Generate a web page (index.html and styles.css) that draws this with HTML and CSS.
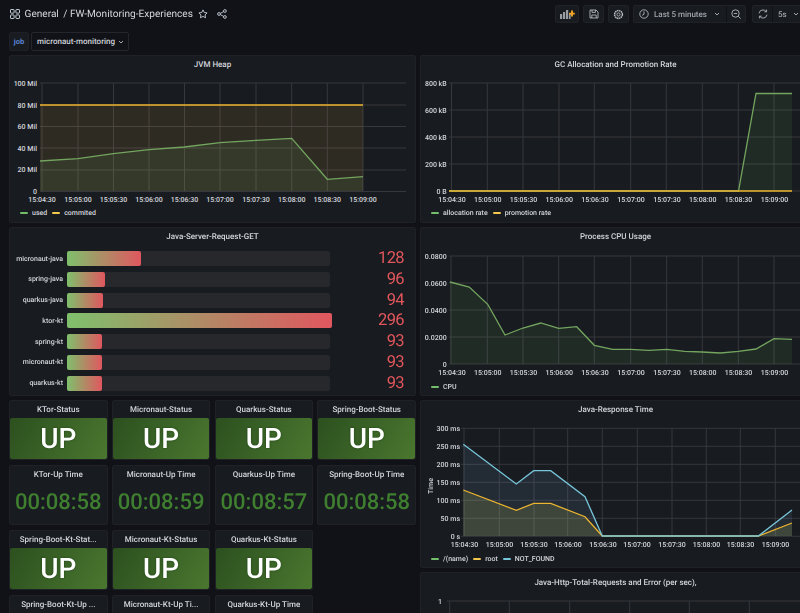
FILE: index.html
```html
<!DOCTYPE html>
<html lang="en">
<head>
<meta charset="utf-8">
<title>FW-Monitoring-Experiences</title>
<link rel="stylesheet" href="styles.css">
</head>
<body>
<div class="app">
  <header class="topbar">
    <div class="crumbs">
      <svg class="ic-grid" width="10" height="10" viewBox="0 0 10 10"><g fill="none" stroke="#c7d0d9" stroke-width="1"><rect x=".5" y=".5" width="3.6" height="3.6" rx=".6"/><rect x="5.9" y=".5" width="3.6" height="3.6" rx=".6"/><rect x=".5" y="5.9" width="3.6" height="3.6" rx=".6"/><rect x="5.9" y="5.9" width="3.6" height="3.6" rx=".6"/></g></svg>
      <span class="crumb">General</span>
      <span class="crumb crumb-sep">/ FW-Monitoring-Experiences</span>
      <svg class="ic-star" width="10" height="10" viewBox="0 0 10 10"><path d="M5 .9l1.25 2.6 2.85.4-2.05 2 .5 2.85L5 7.4 2.45 8.75l.5-2.85-2.05-2 2.85-.4z" fill="none" stroke="#c7d0d9" stroke-width=".9" stroke-linejoin="round"/></svg>
      <svg class="ic-share" width="10" height="10" viewBox="0 0 10 10"><g fill="none" stroke="#c7d0d9" stroke-width=".9"><circle cx="2" cy="5" r="1.4"/><circle cx="7.9" cy="2" r="1.4"/><circle cx="7.9" cy="8" r="1.4"/><path d="M3.3 4.4l3.4-1.8M3.3 5.6l3.4 1.8"/></g></svg>
    </div>
    <div class="tools">
      <button class="tbtn tbtn-add"><svg width="15" height="10" viewBox="0 0 15 10"><path d="M0 5h2.2v5H0zM3 3h2.2v7H3zM6 1h2.2v9H6zM9 4h1.6v6H9z" fill="#9a9ca3"/><path d="M12 1.600v6M9.200 4.600h5.600" stroke="#f5a623" stroke-width="1.900"/></svg></button>
      <button class="tbtn"><svg width="10" height="10" viewBox="0 0 10 10"><g fill="none" stroke="#b6b8c0" stroke-width=".9" stroke-linejoin="round"><path d="M1 1h6l2 2v6H1z"/><path d="M3 1v2.4h3.4V1M2.8 9V6h4.4v3"/></g></svg></button>
      <button class="tbtn"><svg width="11" height="11" viewBox="0 0 11 11"><g fill="none" stroke="#b6b8c0"><circle cx="5.5" cy="5.5" r="1.6" stroke-width=".9"/><circle cx="5.5" cy="5.5" r="3.9" stroke-width="1.5" stroke-dasharray="1.6 .44"/></g></svg></button>
      <div class="tgroup time">
        <div class="tseg seg-range">
          <svg width="10" height="10" viewBox="0 0 10 10"><g fill="none" stroke="#b6b8c0" stroke-width=".9"><circle cx="5" cy="5" r="4.2"/><path d="M5 2.4V5.3L3.2 6.3"/></g></svg>
          <span class="range-text">Last 5 minutes</span>
          <svg class="chev" width="6" height="4" viewBox="0 0 6 4"><path d="M1 1l2 2 2-2" fill="none" stroke="#b6b8c0" stroke-width=".9"/></svg>
        </div>
        <div class="tseg seg-zoom">
          <svg width="10" height="10" viewBox="0 0 10 10"><g fill="none" stroke="#b6b8c0" stroke-width=".9"><circle cx="4.5" cy="4.5" r="3.7"/><path d="M7.2 7.2L9.6 9.6M2.8 4.5h3.4"/></g></svg>
        </div>
      </div>
      <div class="tgroup refresh">
        <div class="tseg seg-ref">
          <svg width="10" height="10" viewBox="0 0 10 10"><g fill="none" stroke="#b6b8c0" stroke-width=".9"><path d="M1 4.3A4 4 0 0 1 8.2 2.6M9 5.7A4 4 0 0 1 1.8 7.4"/><path d="M8.6.6v2.2H6.4M1.4 9.4V7.2h2.2"/></g></svg>
        </div>
        <div class="tseg seg-int"><span class="range-text">5s</span><svg class="chev" width="6" height="4" viewBox="0 0 6 4"><path d="M1 1l2 2 2-2" fill="none" stroke="#b6b8c0" stroke-width=".9"/></svg></div>
      </div>
    </div>
  </header>

  <div class="vars">
    <span class="var-label">job</span>
    <span class="var-value">micronaut-monitoring<svg class="chev" width="6" height="4" viewBox="0 0 6 4"><path d="M1 1l2 2 2-2" fill="none" stroke="#c7d0d9" stroke-width=".8"/></svg></span>
  </div>

  <main class="dash">
    <section class="panel p-h1">
      <h2 class="ptitle">JVM Heap</h2>
      <svg class="chart" width="405" height="131" viewBox="10 73 405 131">
        <g class="grid">
          <path d="M40 83H406M40 105H406M40 126.500H406M40 148H406M40 170H406M40 191.500H406"/>
          <path d="M42 83V191M78 83V191M113.500 83V191M149 83V191M184.500 83V191M220 83V191M256 83V191M291.700 83V191M327.300 83V191M363 83V191"/>
        </g>
        <path class="fill-y" d="M40 105H363V191H40z"/>
        <path class="fill-g" d="M40 161L78 158.700 113.300 153.700 149 149.700 184.300 147 220 142.700 256 140.300 291.700 138.300 327.300 179.300 363 176.700V191H40z"/>
        <path class="line-g" d="M40 161L78 158.700 113.300 153.700 149 149.700 184.300 147 220 142.700 256 140.300 291.700 138.300 327.300 179.300 363 176.700"/>
        <path class="line-y" d="M40 105H363"/>
        <g class="tick yt">
          <text x="37" y="85.500">100 Mil</text><text x="37" y="107.500">80 Mil</text><text x="37" y="129">60 Mil</text><text x="37" y="150.500">40 Mil</text><text x="37" y="172">20 Mil</text><text x="37" y="194">0</text>
        </g>
        <g class="tick xt">
          <text x="42" y="201.500">15:04:30</text><text x="78" y="201.500">15:05:00</text><text x="113.500" y="201.500">15:05:30</text><text x="149" y="201.500">15:06:00</text><text x="184.500" y="201.500">15:06:30</text><text x="220" y="201.500">15:07:00</text><text x="256" y="201.500">15:07:30</text><text x="291.700" y="201.500">15:08:00</text><text x="327.300" y="201.500">15:08:30</text><text x="363" y="201.500">15:09:00</text>
        </g>
      </svg>
      <div class="legend">
        <span class="lg"><i class="sw sw-g"></i>used</span>
        <span class="lg"><i class="sw sw-y"></i>commited</span>
      </div>
    </section>

    <section class="panel p-h1">
      <h2 class="ptitle">GC Allocation and Promotion Rate</h2>
      <svg class="chart" width="390" height="131" viewBox="421 73 390 131">
        <g class="grid">
          <path d="M449 83H811M449 110H811M449 137H811M449 164H811M449 191H811"/>
          <path d="M451.500 83V191M487.300 83V191M523 83V191M559 83V191M594.300 83V191M630.700 83V191M666.300 83V191M702.300 83V191M738.300 83V191M774 83V191"/>
        </g>
        <path class="fill-g" d="M738.500 191L756 93.500H792V191z"/>
        <path class="line-g" d="M449 191H738.500L756 93.500H792"/>
        <path class="line-y" d="M449 191H792"/>
        <g class="tick yt">
          <text x="446.700" y="85.500">800 kB</text><text x="446.700" y="112.500">600 kB</text><text x="446.700" y="139.500">400 kB</text><text x="446.700" y="166.500">200 kB</text><text x="446.700" y="193.500">0 B</text>
        </g>
        <g class="tick xt">
          <text x="452" y="201.500">15:04:30</text><text x="487.700" y="201.500">15:05:00</text><text x="523.500" y="201.500">15:05:30</text><text x="559.300" y="201.500">15:06:00</text><text x="595" y="201.500">15:06:30</text><text x="631" y="201.500">15:07:00</text><text x="667" y="201.500">15:07:30</text><text x="702.700" y="201.500">15:08:00</text><text x="738.500" y="201.500">15:08:30</text><text x="774.500" y="201.500">15:09:00</text>
        </g>
      </svg>
      <div class="legend">
        <span class="lg"><i class="sw sw-g"></i>allocation rate</span>
        <span class="lg"><i class="sw sw-y"></i>promotion rate</span>
      </div>
    </section>

    <section class="panel p-h2">
      <h2 class="ptitle">Java-Server-Request-GET</h2>
      <div class="gauges">
        <div class="grow"><span class="glabel">micronaut-java</span><div class="gtrack"><div class="gbar" style="width:74px"></div></div><span class="gval">128</span></div>
        <div class="grow"><span class="glabel">spring-java</span><div class="gtrack"><div class="gbar" style="width:38px"></div></div><span class="gval">96</span></div>
        <div class="grow"><span class="glabel">quarkus-java</span><div class="gtrack"><div class="gbar" style="width:36px"></div></div><span class="gval">94</span></div>
        <div class="grow"><span class="glabel">ktor-kt</span><div class="gtrack"><div class="gbar" style="width:265px"></div></div><span class="gval">296</span></div>
        <div class="grow"><span class="glabel">spring-kt</span><div class="gtrack"><div class="gbar" style="width:35px"></div></div><span class="gval">93</span></div>
        <div class="grow"><span class="glabel">micronaut-kt</span><div class="gtrack"><div class="gbar" style="width:35px"></div></div><span class="gval">93</span></div>
        <div class="grow"><span class="glabel">quarkus-kt</span><div class="gtrack"><div class="gbar" style="width:35px"></div></div><span class="gval">93</span></div>
      </div>
    </section>

    <section class="panel p-h2">
      <h2 class="ptitle">Process CPU Usage</h2>
      <svg class="chart" width="390" height="133" viewBox="421 245 390 133">
        <g class="grid">
          <path d="M449 256H811M449 283H811M449 310H811M449 337H811M449 364H811"/>
          <path d="M451 256V364M487.300 256V364M523 256V364M558.700 256V364M594.300 256V364M630.700 256V364M666.700 256V364M702.300 256V364M738.300 256V364M774 256V364"/>
        </g>
        <path class="fill-g" d="M450 282L469.300 287 487.700 304.300 505 335 523 328 540.700 323 558.700 328.300 576.700 326.700 594.300 345.300 612.700 349.300 630.700 349.300 648.700 350.300 666.700 349.300 684.700 351.300 702.300 352 720.300 353 738.300 351.300 756 349 774 338.700 792 339.300V364H450z"/>
        <path class="line-g" d="M450 282L469.300 287 487.700 304.300 505 335 523 328 540.700 323 558.700 328.300 576.700 326.700 594.300 345.300 612.700 349.300 630.700 349.300 648.700 350.300 666.700 349.300 684.700 351.300 702.300 352 720.300 353 738.300 351.300 756 349 774 338.700 792 339.300"/>
        <g class="tick yt">
          <text x="446.700" y="258.500">0.0800</text><text x="446.700" y="285.500">0.0600</text><text x="446.700" y="312.500">0.0400</text><text x="446.700" y="339.500">0.0200</text><text x="446.700" y="366.500">0</text>
        </g>
        <g class="tick xt">
          <text x="452" y="374.500">15:04:30</text><text x="487.700" y="374.500">15:05:00</text><text x="523.500" y="374.500">15:05:30</text><text x="559.300" y="374.500">15:06:00</text><text x="595" y="374.500">15:06:30</text><text x="631" y="374.500">15:07:00</text><text x="667" y="374.500">15:07:30</text><text x="702.700" y="374.500">15:08:00</text><text x="738.500" y="374.500">15:08:30</text><text x="774.500" y="374.500">15:09:00</text>
        </g>
      </svg>
      <div class="legend">
        <span class="lg"><i class="sw sw-g"></i>CPU</span>
      </div>
    </section>

    <div class="stats">
      <section class="panel stat"><h2 class="ptitle">KTor-Status</h2><div class="up">UP</div></section>
      <section class="panel stat"><h2 class="ptitle">Micronaut-Status</h2><div class="up">UP</div></section>
      <section class="panel stat"><h2 class="ptitle">Quarkus-Status</h2><div class="up">UP</div></section>
      <section class="panel stat"><h2 class="ptitle">Spring-Boot-Status</h2><div class="up">UP</div></section>
      <section class="panel stat"><h2 class="ptitle">KTor-Up Time</h2><div class="uptime">00:08:58</div></section>
      <section class="panel stat"><h2 class="ptitle">Micronaut-Up Time</h2><div class="uptime">00:08:59</div></section>
      <section class="panel stat"><h2 class="ptitle">Quarkus-Up Time</h2><div class="uptime">00:08:57</div></section>
      <section class="panel stat"><h2 class="ptitle">Spring-Boot-Up Time</h2><div class="uptime">00:08:58</div></section>
      <section class="panel stat"><h2 class="ptitle">Spring-Boot-Kt-Stat...</h2><div class="up">UP</div></section>
      <section class="panel stat"><h2 class="ptitle">Micronaut-Kt-Status</h2><div class="up">UP</div></section>
      <section class="panel stat"><h2 class="ptitle">Quarkus-Kt-Status</h2><div class="up">UP</div></section>
      <div class="stat-empty"></div>
      <section class="panel stat"><h2 class="ptitle">Spring-Boot-Kt-Up ...</h2></section>
      <section class="panel stat"><h2 class="ptitle">Micronaut-Kt-Up Ti...</h2></section>
      <section class="panel stat"><h2 class="ptitle">Quarkus-Kt-Up Time</h2></section>
    </div>

    <div class="rightcol">
      <section class="panel p-h1">
        <h2 class="ptitle">Java-Response Time</h2>
        <svg class="chart" width="390" height="132" viewBox="421 418 390 132">
          <g class="grid">
            <path d="M461 428.300H811M461 446.300H811M461 464.300H811M461 482.300H811M461 500.300H811M461 518.300H811M461 536.300H811"/>
            <path d="M464 428V536M499.300 428V536M534 428V536M567.700 428V536M602.300 428V536M637.300 428V536M672 428V536M706.300 428V536M740.300 428V536M775.300 428V536"/>
          </g>
          <path class="fill-b" d="M463.300 444.300L516.300 484 533.700 470.700 550.700 470.700 585 496.700 602.300 536H758.300L792 510V536H463.300z"/>
          <path class="fill-y" d="M463.300 490L516.300 510.300 533.700 503.300 550.700 503.300 585 516.700 602.300 536H758.300L792 523V536H463.300z"/>
          <path class="fill-g" d="M463.300 490L516.300 510.300 533.700 503.300 550.700 503.300 585 516.700 602.300 536H758.300L792 523V536H463.300z"/>
          <path class="line-y" d="M463.300 490L516.300 510.300 533.700 503.300 550.700 503.300 585 516.700 602.300 536H758.300L792 523"/>
          <path class="line-b" d="M463.300 444.300L516.300 484 533.700 470.700 550.700 470.700 585 496.700 602.300 536H758.300L792 510"/>
          <g class="tick yt">
            <text x="460" y="430.800">300 ms</text><text x="460" y="448.800">250 ms</text><text x="460" y="466.800">200 ms</text><text x="460" y="484.800">150 ms</text><text x="460" y="502.800">100 ms</text><text x="460" y="520.800">50 ms</text><text x="460" y="538.800">0 s</text>
          </g>
          <text class="tick ytitle" transform="rotate(-90 432.500 486)" x="432.500" y="486">Time</text>
          <g class="tick xt">
            <text x="464.500" y="546.500">15:04:30</text><text x="499.500" y="546.500">15:05:00</text><text x="534" y="546.500">15:05:30</text><text x="568" y="546.500">15:06:00</text><text x="603" y="546.500">15:06:30</text><text x="637" y="546.500">15:07:00</text><text x="672" y="546.500">15:07:30</text><text x="706.500" y="546.500">15:08:00</text><text x="740.500" y="546.500">15:08:30</text><text x="775.500" y="546.500">15:09:00</text>
          </g>
        </svg>
        <div class="legend">
          <span class="lg"><i class="sw sw-g"></i>/(name)</span>
          <span class="lg"><i class="sw sw-y"></i>root</span>
          <span class="lg"><i class="sw sw-b"></i>NOT_FOUND</span>
        </div>
      </section>
      <section class="panel p-last">
        <h2 class="ptitle">Java-Http-Total-Requests and Error (per sec),</h2>
        <svg class="chart" width="390" height="21" viewBox="421 592 390 21">
          <g class="grid">
            <path d="M447 601H811"/>
            <path d="M449.700 601V613M509.300 601V613M569.700 601V613M629.700 601V613M689.300 601V613M749.300 601V613"/>
          </g>
          <text class="tick yt" x="442" y="603.500">1</text>
        </svg>
      </section>
    </div>
  </main>
</div>
</body>
</html>
```

FILE: styles.css
```css
* { box-sizing: border-box; }
html, body { margin: 0; padding: 0; }
body {
  background: #111217;
  color: #c7c9d1;
  font-family: Roboto, "Liberation Sans", sans-serif;
  text-rendering: geometricPrecision;
  width: 800px;
  height: 613px;
  overflow: hidden;
}
.app { width: 800px; height: 613px; overflow: hidden; filter: blur(.5px); }

/* top bar */
.topbar {
  height: 28px;
  padding: 5px 0 0 9.500px;
  display: flex;
  justify-content: space-between;
  width: 830px;
}
.crumbs { display: flex; align-items: center; height: 18px; }
.crumb { font-size: 10.100px; color: #d4d6de; margin-left: 5px; }
.crumb-sep { margin-left: 4.500px; }
.ic-star { margin-left: 5px; }
.ic-share { margin-left: 9px; }
.tools { display: flex; gap: 4px; height: 18px; }
.tbtn {
  width: 21px;
  height: 18px;
  padding: 0;
  display: flex;
  align-items: center;
  justify-content: center;
  background: #181b1f;
  border: 1px solid #202226;
  border-radius: 2px;
}
.tbtn-add { width: 24px; }
.tgroup {
  display: flex;
  background: #181b1f;
  border: 1px solid #202226;
  border-radius: 2px;
}
.time { width: 113px; }
.refresh { width: 78px; margin-left: 2px; }
.tseg { display: flex; align-items: center; height: 100%; }
.seg-range { width: 93px; padding-left: 5px; border-right: 1px solid #111217; }
.seg-zoom { flex: 1; justify-content: center; }
.seg-ref { width: 20px; justify-content: center; border-right: 1px solid #111217; }
.seg-int { padding-left: 5px; }
.range-text { font-size: 8px; font-weight: 500; color: #a3a5ae; margin-left: 5px; }
.seg-int .range-text { margin-left: 0; }
.chev { margin-left: 7px; flex: none; }
.seg-int .chev { margin-left: 6px; }

/* variables */
.vars { display: flex; gap: 2px; height: 19px; margin: 4px 0 0 9px; }
.var-label {
  width: 20px;
  display: flex;
  align-items: center;
  justify-content: center;
  font-size: 7.500px;
  font-weight: 700;
  color: #5b83d6;
  background: #181b1f;
  border: 1px solid #1e2025;
  border-radius: 2px;
}
.var-value {
  width: 98px;
  display: flex;
  align-items: center;
  padding-left: 5px;
  font-size: 8px;
  font-weight: 500;
  color: #d0d2da;
  background: #111217;
  border: 1px solid #24262b;
  border-radius: 2px;
}
.var-value .chev { margin-left: 3px; }

/* dashboard */
.dash {
  width: 811px;
  margin: 4px 0 0 9px;
  display: grid;
  grid-template-columns: 407px 391px;
  grid-template-rows: 168px 169px auto;
  gap: 4px;
}
.panel {
  background: #181b1f;
  border: 1px solid #1f2125;
  border-radius: 2px;
  overflow: hidden;
}
.ptitle {
  margin: 0;
  height: 17px;
  line-height: 17px;
  font-size: 8px;
  font-weight: 500;
  text-align: center;
  color: #d4d6de;
  white-space: nowrap;
}
.chart { display: block; }
.grid path { stroke: #36383d; stroke-width: 1; fill: none; }
.tick text, text.tick { font-size: 7px; font-weight: 500; fill: #d4d6de; }
.yt text, text.yt { text-anchor: end; }
.xt text { text-anchor: middle; }
.ytitle { text-anchor: middle; }
.line-g, .line-y, .line-b { fill: none; stroke-width: 1.300; }
.line-g { stroke: #73a55f; }
.line-y { stroke: #ecb42f; }
.line-b { stroke: #76c5d8; }
.fill-g { fill: rgba(115, 191, 105, .1); }
.fill-y { fill: rgba(245, 190, 80, .1); }
.fill-b { fill: rgba(138, 184, 255, .1); }

.legend {
  display: flex;
  gap: 5px;
  height: 12px;
  margin-top: 3px;
  padding-left: 10px;
  font-size: 7px;
  font-weight: 500;
  color: #d4d6de;
}
.lg { display: flex; align-items: center; }
.sw { width: 8px; height: 2px; border-radius: 1px; margin-right: 4px; }
.sw-g { background: #73bf69; }
.sw-y { background: #f2c94c; }
.sw-b { background: #76c5d8; }

/* bar gauges */
.gauges { display: flex; flex-direction: column; gap: 5.770px; padding: 6px 0 0 0; }
.grow { display: flex; align-items: center; height: 15px; }
.glabel {
  width: 53px;
  text-align: right;
  font-size: 7px;
  font-weight: 500;
  color: #d4d6de;
  white-space: nowrap;
}
.gtrack {
  width: 263px;
  height: 15px;
  margin-left: 4px;
  background: #26282c;
  border-radius: 2px;
}
.gbar {
  height: 100%;
  border-radius: 2px;
  background: linear-gradient(90deg, #7fc06c, #e0575f);
}
.gval {
  width: 74px;
  text-align: right;
  font-size: 16.500px;
  letter-spacing: -.6px;
  color: #e0565c;
}

/* stats */
.stats {
  display: grid;
  grid-template-columns: repeat(4, 98.500px);
  grid-auto-rows: 60px;
  column-gap: 4.330px;
  row-gap: 5px;
}
.stat-empty { visibility: hidden; }
.stat { display: flex; flex-direction: column; }
.up {
  flex: 1;
  display: flex;
  align-items: center;
  justify-content: center;
  font-size: 28px;
  font-weight: 500;
  color: #fff;
  text-shadow: 0 0 2px #173d0e;
  background: linear-gradient(120deg, #2c501f, #4a772f);
  border-radius: 2px;
}
.uptime {
  flex: 1;
  display: flex;
  align-items: center;
  justify-content: center;
  font-size: 22px;
  font-weight: 500;
  color: #3f7f30;
  padding-bottom: 2px;
}

/* right column */
.rightcol { display: flex; flex-direction: column; gap: 4px; }
.rightcol .p-h1 { height: 168px; flex: none; }
.p-last { height: 60px; flex: none; }
.p-last .ptitle { height: 19px; line-height: 19px; }
```
